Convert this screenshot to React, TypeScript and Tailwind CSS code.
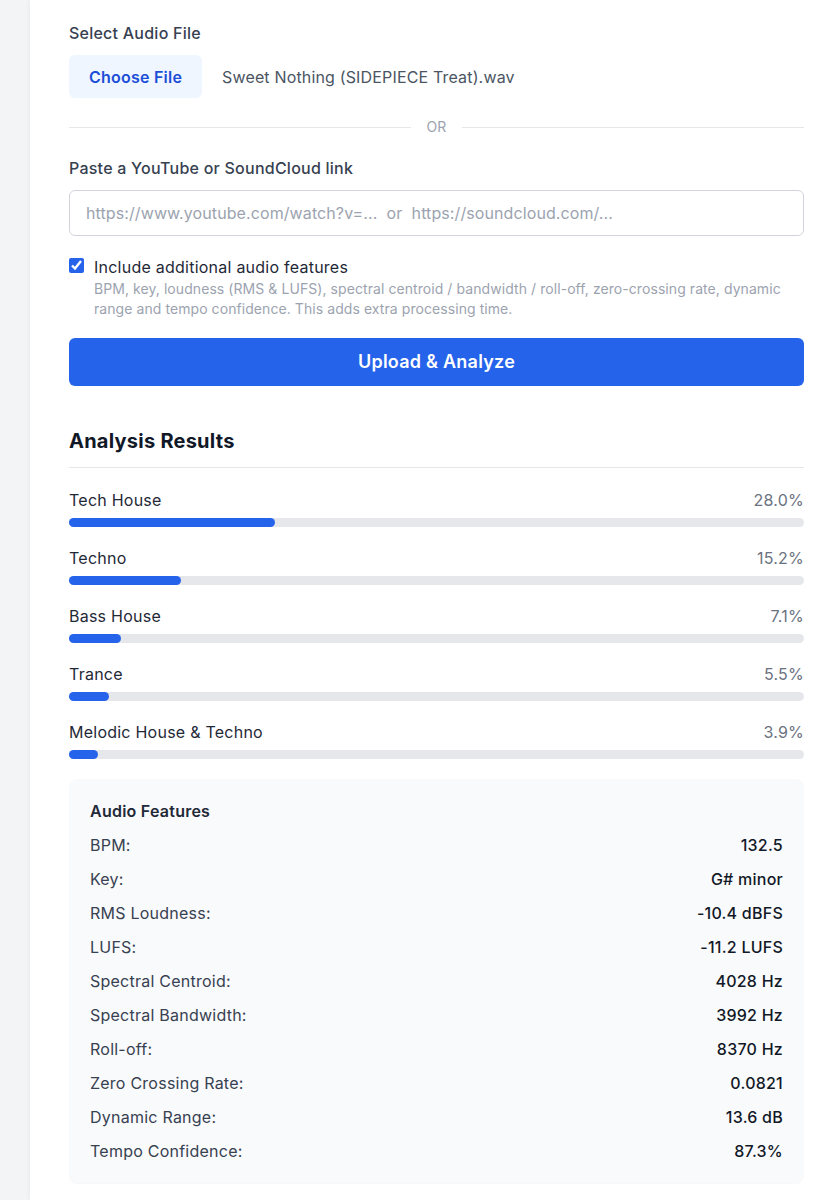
import React from 'react';

const genres = [
  { name: 'Tech House', pct: 28.0 },
  { name: 'Techno', pct: 15.2 },
  { name: 'Bass House', pct: 7.1 },
  { name: 'Trance', pct: 5.5 },
  { name: 'Melodic House & Techno', pct: 3.9 },
];

const features: [string, string][] = [
  ['BPM:', '132.5'],
  ['Key:', 'G# minor'],
  ['RMS Loudness:', '-10.4 dBFS'],
  ['LUFS:', '-11.2 LUFS'],
  ['Spectral Centroid:', '4028 Hz'],
  ['Spectral Bandwidth:', '3992 Hz'],
  ['Roll-off:', '8370 Hz'],
  ['Zero Crossing Rate:', '0.0821'],
  ['Dynamic Range:', '13.6 dB'],
  ['Tempo Confidence:', '87.3%'],
];

export default function App() {
  return (
    <div
      className="flex min-h-[1200px] bg-[#f3f4f6] tracking-[0.015em]"
      style={{ fontFamily: 'Inter, "Noto Sans", sans-serif' }}
    >
      {/* side strip */}
      <div className="w-[30px] shrink-0 bg-[#f3f4f6]" />

      <main className="flex-1 bg-white pl-[39px] pr-[35px] pt-[21px] shadow-[-2px_0_4px_rgba(0,0,0,0.03)]">
        {/* file picker */}
        <label className="block text-base leading-6 font-medium text-[#374151]">Select Audio File</label>
        <div className="mt-[10px] flex items-center">
          <button
            type="button"
            className="h-[43px] w-[133px] rounded-md bg-[#eff6ff] text-base font-semibold text-[#1d4ed8]"
          >
            Choose File
          </button>
          <span className="ml-5 text-base tracking-[0.01em] text-[#4b5563]">Sweet Nothing (SIDEPIECE Treat).wav</span>
        </div>

        {/* divider */}
        <div className="mt-[19px] flex h-5 items-center">
          <div className="h-px flex-1 bg-[#e5e7eb]" />
          <span className="px-[15px] text-sm text-[#9ca3af]">OR</span>
          <div className="h-px flex-1 bg-[#e5e7eb]" />
        </div>

        {/* link */}
        <label className="mt-[19px] block text-base leading-6 font-medium text-[#374151]">
          Paste a YouTube or SoundCloud link
        </label>
        <input
          type="text"
          placeholder="https://www.youtube.com/watch?v=...  or  https://soundcloud.com/..."
          className="mt-[10px] h-[46px] w-full rounded-md border border-[#d1d5db] px-4 text-base tracking-[0.006em] text-gray-800 placeholder:text-[#9ca3af] outline-none"
        />

        {/* options */}
        <div className="mt-[19px] flex items-start">
          <input type="checkbox" defaultChecked className="mt-[3px] h-[15px] w-[15px] shrink-0 accent-[#2563eb]" />
          <div className="ml-[10px]">
            <div className="text-base leading-6 text-[#1f2937]">Include additional audio features</div>
            <p className="text-sm leading-5 tracking-[0.005em] text-[#9ca3af]">
              BPM, key, loudness (RMS &amp; LUFS), spectral centroid / bandwidth / roll-off, zero-crossing rate, dynamic
              range and tempo confidence. This adds extra processing time.
            </p>
          </div>
        </div>

        <button
          type="button"
          className="mt-[19px] h-12 w-full rounded-md bg-[#2563eb] text-lg font-semibold text-white"
        >
          Upload &amp; Analyze
        </button>

        {/* results */}
        <h2 className="mt-[41px] border-b border-[#e5e7eb] pb-3 text-xl leading-7 font-bold text-[#111827]">
          Analysis Results
        </h2>

        <div className="mt-5 flex flex-col gap-[19px]">
          {genres.map((g) => (
            <div key={g.name}>
              <div className="flex justify-between text-base leading-6">
                <span className="text-[#1f2937]">{g.name}</span>
                <span className="text-[#6b7280]">{g.pct.toFixed(1)}%</span>
              </div>
              <div className="mt-[6px] h-[9px] w-full rounded-full bg-[#e5e7eb]">
                <div className="h-full rounded-full bg-[#2563eb]" style={{ width: `${g.pct}%` }} />
              </div>
            </div>
          ))}
        </div>

        {/* features */}
        <div className="mt-5 rounded-lg bg-[#f9fafb] px-[21px] pt-5 pb-5 shadow-[0_1px_1px_rgba(0,0,0,0.03)]">
          <h3 className="text-base leading-6 font-semibold text-[#1f2937]">Audio Features</h3>
          <div className="mt-[10px] flex flex-col gap-[10px]">
            {features.map(([k, v]) => (
              <div key={k} className="flex justify-between text-base leading-6">
                <span className="text-[#374151]">{k}</span>
                <span className="font-medium text-[#111827]">{v}</span>
              </div>
            ))}
          </div>
        </div>
      </main>
    </div>
  );
}
